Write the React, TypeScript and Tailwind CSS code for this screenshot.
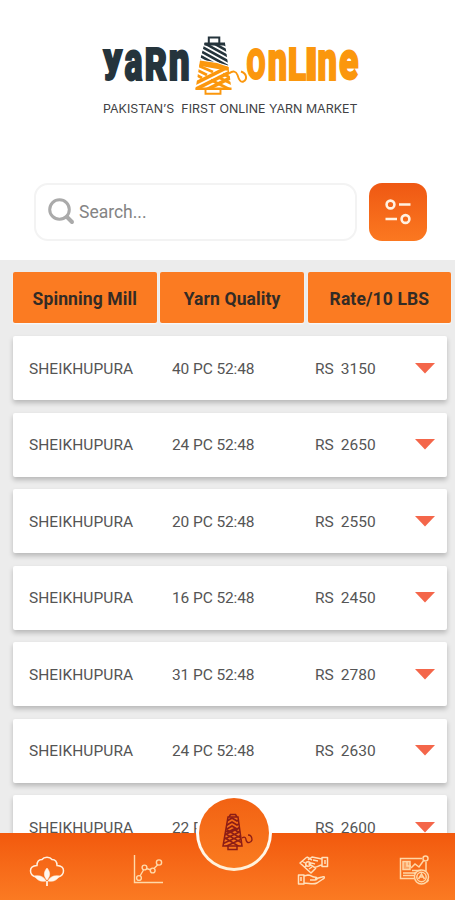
import React from 'react';

const rows = [
  ['SHEIKHUPURA', '40 PC 52:48', '3150'],
  ['SHEIKHUPURA', '24 PC 52:48', '2650'],
  ['SHEIKHUPURA', '20 PC 52:48', '2550'],
  ['SHEIKHUPURA', '16 PC 52:48', '2450'],
  ['SHEIKHUPURA', '31 PC 52:48', '2780'],
  ['SHEIKHUPURA', '24 PC 52:48', '2630'],
  ['SHEIKHUPURA', '22 PC 52:48', '2600'],
];

type LetterProps = { c: string; x: number; w: number; size: number; y?: number };

function Letter({ c, x, w, size, y = 54.5 }: LetterProps) {
  return (
    <text x={x} y={y} fontSize={size} textLength={w} lengthAdjust="spacingAndGlyphs" strokeWidth="1.9">
      {c}
    </text>
  );
}

function Logo() {
  return (
    <svg width="270" height="86" viewBox="-4 0 270 86" className="font-['Roboto',sans-serif] font-black">
      <g fill="#25343c" stroke="#25343c">
        <Letter c="y" x={6.5} w={18.5} size={41.5} y={45.5} />
        <Letter c="a" x={27.5} w={18} size={55} y={53.7} />
        <Letter c="R" x={47.8} w={22.2} size={43.5} y={54.2} />
        <Letter c="n" x={71.8} w={21} size={56} y={54.2} />
      </g>
      <Cone />
      <g fill="#fb970d" stroke="#fb970d">
        <Letter c="O" x={149.5} w={19} size={42} y={53.3} />
        <Letter c="n" x={170.8} w={19.3} size={55} y={53.7} />
        <Letter c="L" x={191} w={18} size={43.5} y={53.7} />
        <Letter c="I" x={207.8} w={13} size={43.5} y={53.7} />
        <Letter c="n" x={220.5} w={19.5} size={55} y={53.7} />
        <Letter c="e" x={242} w={19.5} size={54} y={53} />
      </g>
    </svg>
  );
}

function Cone() {
  return (
    <g fill="none">
      <clipPath id="cone-top">
        <path d="M107.500 17h20.500l3.200 22.500-10-3-18-3z" />
      </clipPath>
      <clipPath id="cone-bottom">
        <path d="M103 34.500l17 2.500 11.500 4 3 22.500H98.500z" />
      </clipPath>
      <path d="M111.800 17v-5.500h10.500V17" stroke="#25343c" strokeWidth="2" />
      <path d="M107.500 16.500h20.500v3h-20.500z" fill="#25343c" />
      <g clipPath="url(#cone-top)" stroke="#25343c" strokeWidth="2.500">
        <path d="M98 27l38 21M98 22l38 21M98 17l38 21M98 12l38 21M98 7l38 21M98 2l38 21M98 32l38 21" />
      </g>
      <g clipPath="url(#cone-bottom)" stroke="#fb970d">
        <path d="M100 36l34 6" strokeWidth="6.500" />
        <path d="M98 43l12 6M100 39l16 7M96 47l9 5" strokeWidth="2.800" />
        <path d="M95 59l40-20M95 65l40-20M103 67l34-17" strokeWidth="3.600" />
        <path d="M121 51l16 8M114 54l20 10M126 48l10 5" strokeWidth="2.800" />
      </g>
      <path d="M98.500 61.500h36V64h-36z" fill="#fb970d" />
      <path d="M108.500 63v4.800h15V63" stroke="#fb970d" strokeWidth="1.900" />
      <path d="M132 47.500c4-3 7-2.500 8.500 1.500 1.500 5 3 7.500 6 6.500 4-2 3.500-8-2.500-10" stroke="#fb970d" strokeWidth="1.900" />
    </g>
  );
}

function CottonIcon() {
  return (
    <svg width="36" height="32" viewBox="0 0 36 32" fill="none" stroke="#fff0df" strokeWidth="1.500">
      <path d="M7 22C0 20-1 11 8 10.500 8 5 11 4.500 13 4.500c2-3 8-3 10 0 3 0 5 1 5 6 9 .500 8 9.500 1 11.500" />
      <path d="M18 25c-3.500-4-3.500-8 0-12 3.500 4 3.500 8 0 12zM17 26c-6 1-9-1-11.500-5 6-1 9.500 1 11.500 5zM19 26c6 1 9-1 11.500-5-6-1-9.500 1-11.500 5z" fill="#fff7ef" strokeWidth=".6" />
      <path d="M18 26v5" strokeWidth="1.800" />
    </svg>
  );
}

function ChartIcon() {
  return (
    <svg width="30" height="30" viewBox="0 0 30 30" fill="none" stroke="#ffd9a9" strokeWidth="1.400">
      <path d="M1.500 0v27.500H30M7 21l3.500-6M13.500 13.500l4.500 1.500M21 13.500l4-4" />
      <circle cx="6" cy="23" r="2.400" />
      <circle cx="11.500" cy="12.500" r="2.400" />
      <circle cx="19.700" cy="15.500" r="2.400" />
      <circle cx="26" cy="7.500" r="2.600" />
    </svg>
  );
}

function HandsIcon() {
  return (
    <svg width="32" height="32" viewBox="0 0 32 32" fill="none" stroke="#ffe0bc" strokeWidth="1.500" strokeLinejoin="round">
      <path d="M25 2.500h5.500v9H25zM25 4l-5-1-5-1-4 3M25 10c-3 0-5 3-8 2l-5-3c1-2 3-1 6 0M16 5l5 1" />
      <path d="M10 2L3 8l11 10 5-5M10 2l5 3M5 6l3 2M12 14l3-2M8 12l2-2" />
      <circle cx="11" cy="9" r="2.300" />
      <path d="M1.500 20H7v9H1.500zM7 21l4-1c3 0 4 2 6 2 4 0 4 3 1 3h-5M18 24l7-2c3-1 3 1 1 2l-6 4c-4 2-8 0-13 0M4 22v4M28 5v4" />
    </svg>
  );
}

function ReportIcon() {
  return (
    <svg width="31" height="31" viewBox="0 0 31 31" fill="none" stroke="#ffd7a6" strokeWidth="1.500">
      <path d="M23 3.500H1.500v20H15M27 7v9" />
      <path d="M4 6.500h7v8H4z" fill="#ffd7a6" fillOpacity=".55" />
      <path d="M8 6v5h4M4 18h12M4 20.500h11M12 13l4-4 4 3 5-7M13 15.500h9" />
      <circle cx="26.500" cy="3.500" r="2.500" />
      <circle cx="22.500" cy="22" r="7" />
      <circle cx="22.500" cy="22" r="4.700" />
      <path d="M19.500 24l3-5 3 5M20.500 22h4M17 17l-2 2M28 27l1.500-2" />
    </svg>
  );
}

function SpoolIcon() {
  return (
    <svg width="33" height="39" viewBox="0 0 33 39" fill="none" stroke="#8c1d16" strokeWidth="1.500">
      <clipPath id="nav-spool">
        <path d="M8 4h10l4 29H3z" />
      </clipPath>
      <path d="M9 4l1.500-2.500h5L17 4M8 4h10l4 29H3zM8 33v3.500h9V33" />
      <g clipPath="url(#nav-spool)">
        <path d="M0 4l7 4 5-3 5 3 7-4M0 8l7 4 5-3 5 3 7-4M0 12l7 4 5-3 5 3 7-4M0 16l8 3 6-3 4 3 6-3" strokeWidth="1.700" />
        <path d="M0 24l24-11M0 28l24-11M0 32l24-11M0 36l24-11M0 18l24 13M0 22l20 12M7 17l17 10" strokeWidth="1.600" />
      </g>
      <path d="M22 25c3-2 4 0 4 2 1 4 5 3 6 0 0-3-1-5-4-5" strokeWidth="1.300" />
    </svg>
  );
}

export default function App() {
  return (
    <div className="flex h-[900px] w-[455px] flex-col overflow-hidden bg-white font-['Roboto',sans-serif]">
      <header className="flex h-[259.500px] shrink-0 flex-col">
        <div className="flex h-[182.500px] shrink-0 flex-col items-center pt-[26px]">
          <Logo />
          <p className="-mt-[11px] ml-[6px] flex h-4 items-center">
            <svg width="256" height="16" viewBox="0 0 256 16" className="font-['Inter',sans-serif]">
              <text x="0" y="12" fontSize="11.200" fill="#414144" textLength="254.500" lengthAdjust="spacingAndGlyphs">
                {'PAKISTAN’S\u00a0 FIRST ONLINE YARN MARKET'}
              </text>
            </svg>
          </p>
        </div>
        <div className="flex gap-3 pl-[34px]">
          <label className="flex h-[58px] w-[323px] items-center rounded-[14px] border-2 border-[#f3f3f3] bg-white pl-3">
            <svg width="27" height="27" viewBox="0 0 27 27" fill="none" stroke="#aaa">
              <circle cx="11.500" cy="11.500" r="9.800" strokeWidth="3" />
              <path d="M19 19l5 5" strokeWidth="4" strokeLinecap="round" />
            </svg>
            <span className="mt-[2px] ml-1 text-[17.500px] text-[#848484]">Search...</span>
          </label>
          <button className="flex h-[58px] w-[58px] items-center justify-center rounded-[13px] bg-linear-to-b from-[#ef5813] to-[#fb7820]">
            <svg width="28" height="28" viewBox="0 0 28 28" fill="none" stroke="#fff2e2" strokeWidth="2.600">
              <circle cx="6.500" cy="6.500" r="3.900" />
              <path d="M15 6.500h11.500M1.500 21h11.500" />
              <circle cx="21.500" cy="21" r="3.900" />
            </svg>
          </button>
        </div>
      </header>

      <main className="min-h-0 flex-1 overflow-hidden bg-[#ececec]">
        <div className="flex gap-[3.700px] pt-[12.500px] pl-[13px]">
          {['Spinning Mill', 'Yarn Quality', 'Rate/10 LBS'].map((title) => (
            <div key={title} className="flex h-[51px] w-[143.600px] items-center justify-center rounded-[2px] bg-[#fb7b22] pt-[4px] text-[17.500px] font-bold tracking-[0.12px] text-[#332b25] shadow-[0_1px_2px_#ffffffcc]">
              {title}
            </div>
          ))}
        </div>
        <div className="mt-[13px] ml-[13px] flex w-[434px] flex-col gap-[12.500px]">
          {rows.map(([mill, quality, rate], i) => (
            <div key={i} className="flex h-16 shrink-0 items-center rounded-[2px] bg-white pt-[2.600px] pl-[16px] text-[15.500px] text-[#555] shadow-[0_3px_5px_#00000038]">
              <span className="w-[143px] tracking-[0.05px]">{mill}</span>
              <span className="w-[143px] tracking-[-0.1px]">{quality}</span>
              <span className="flex w-[100px] gap-[7px]"><span>RS</span><span>{rate}</span></span>
              <svg width="20" height="11" viewBox="0 0 20 11" className="-mt-[2px]"><path d="M0 0h20L10 10.500z" fill="#f4664a" /></svg>
            </div>
          ))}
        </div>
      </main>

      <nav className="relative flex h-[67.500px] shrink-0 bg-linear-to-b from-[#f2590d] to-[#fb7a22] pt-[22px]">
        <div className="flex w-[133px] pl-[28.500px]"><CottonIcon /></div>
        <div className="flex w-[164px]"><ChartIcon /></div>
        <div className="flex w-[102px]"><HandsIcon /></div>
        <ReportIcon />
        <button className="absolute -top-[38px] left-[196px] flex h-[76px] w-[76px] items-center justify-center rounded-full bg-linear-to-b from-white from-40% to-[#fff0d6]">
          <span className="flex h-[70px] w-[70px] items-center justify-center rounded-full bg-linear-to-b from-[#f26213] to-[#fa7b20] pl-[5px]">
            <SpoolIcon />
          </span>
        </button>
      </nav>
    </div>
  );
}
